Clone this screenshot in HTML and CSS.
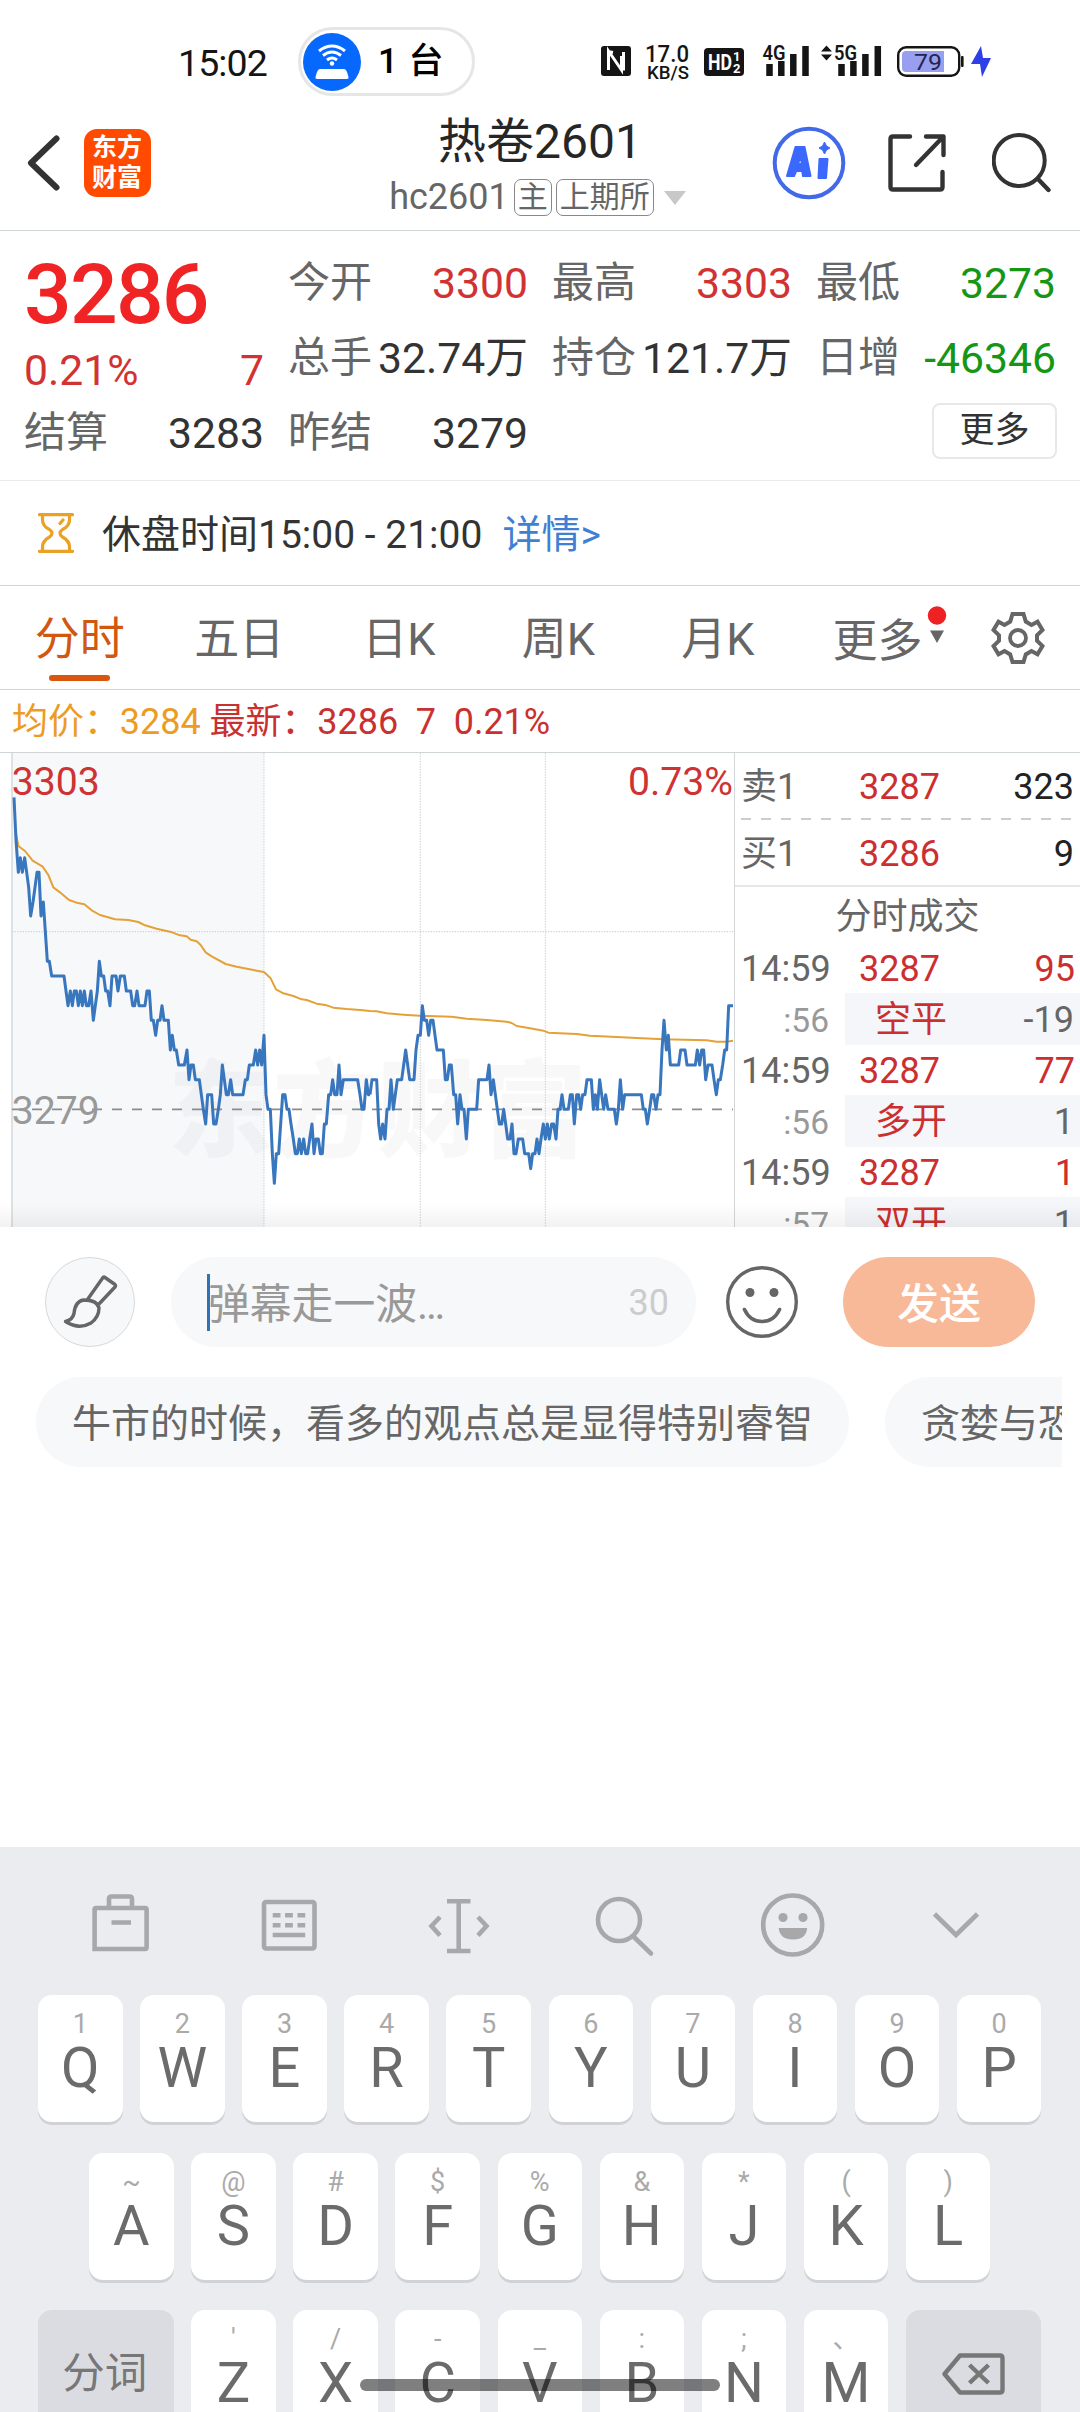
FILE: index.html
```html
<!DOCTYPE html>
<html lang="zh-CN">
<head>
<meta charset="utf-8">
<title>热卷2601</title>
<link rel="stylesheet" href="styles.css">
</head>
<body>
<div class="screen">
  <div class="statusbar">
    <span class="clock">15:02</span>
    <div class="hotspot">
      <svg class="hotspot-icon" viewBox="0 0 58 58">
        <circle cx="29" cy="29" r="29" fill="#0768fd"/>
        <g fill="none" stroke="#fff" stroke-width="3">
          <path d="M16 18q13-10 26 0"/><path d="M20 22.500q9-7 18 0"/><path d="M24 27q5-4 10 0"/>
        </g>
        <circle cx="29" cy="30.500" r="2.200" fill="#fff"/>
        <path d="M17 36h24q2 0 3 3l1.500 5q.5 2-1.500 2H14q-2 0-1.500-2l1.500-5q1-3 3-3z" fill="#fff"/>
      </svg>
      <span class="hotspot-count">1 台</span>
    </div>
    <svg class="status-icons" viewBox="600 40 394 44">
      <rect x="601" y="46" width="30" height="30" rx="3" fill="#151515"/>
      <path d="M608.500 70V51l13 19V56M608 51.500l5 1M623.500 52v18.500" fill="none" stroke="#fff" stroke-width="3"/>
      <text x="645" y="62" font-size="24" font-weight="500" textLength="44" lengthAdjust="spacingAndGlyphs">17.0</text>
      <text x="647" y="79" font-size="17.500" font-weight="500" textLength="42" lengthAdjust="spacingAndGlyphs">KB/S</text>
      <rect x="704" y="48" width="40" height="28" rx="4" fill="#151515"/>
      <text x="708" y="70" font-size="22" font-weight="700" fill="#fff" textLength="24" lengthAdjust="spacingAndGlyphs">HD</text>
      <text x="733" y="61" font-size="13" font-weight="700" fill="#fff">1</text>
      <text x="733" y="73" font-size="13" font-weight="700" fill="#fff">2</text>
      <text x="762.500" y="59.500" font-size="21" font-weight="600" textLength="23" lengthAdjust="spacingAndGlyphs">4G</text>
      <path d="M769.500 64v12M781.300 61v15M793.300 54v22M805.500 46v30" stroke="#151515" stroke-width="6.500"/>
      <path d="M821 51.500l5.500-6 5.500 6zM821 54.500l5.500 6 5.500-6z" fill="#151515"/>
      <text x="834" y="59.500" font-size="21" font-weight="600" textLength="23" lengthAdjust="spacingAndGlyphs">5G</text>
      <path d="M841.500 64v12M853.400 61v15M865.400 54v22M877.800 46v30" stroke="#151515" stroke-width="6.500"/>
      <rect x="898.200" y="47.200" width="61" height="28.600" rx="8" fill="#fff" stroke="#151515" stroke-width="2.400"/>
      <path d="M944 51v21h-38q-4 0-4-4V55q0-4 4-4z" fill="#999ff0"/>
      <text x="914" y="69.500" font-size="22.500" fill="#22264f" textLength="28" lengthAdjust="spacingAndGlyphs">79</text>
      <rect x="961" y="56" width="2.600" height="11" rx="1" fill="#151515"/>
      <path d="M981 46l-10 18h9l2 13 9-19h-8z" fill="#2e3fe6"/>
    </svg>
  </div>

  <header class="header">
    <div class="header-left">
      <svg class="back" viewBox="0 0 36 60"><path d="M31.500 5.500L6 30l25.500 24.500" fill="none" stroke="#333" stroke-width="6" stroke-linecap="round" stroke-linejoin="round"/></svg>
      <div class="logo"><span>东方</span><span>财富</span></div>
    </div>
    <div class="header-title">
      <h1>热卷2601</h1>
      <div class="subtitle">
        <span class="code">hc2601</span><span class="tag">主</span><span class="tag">上期所</span>
        <svg class="caret" viewBox="0 0 22 14"><path d="M0 0h22L11 14z" fill="#c8c8c8"/></svg>
      </div>
    </div>
    <div class="header-actions">
      <svg class="ai" viewBox="0 0 74 74">
        <circle cx="37" cy="37" r="34.300" fill="none" stroke="#4169e8" stroke-width="4"/>
        <g fill="#3b69ff" stroke="#3b69ff" stroke-width="2" stroke-linejoin="round">
          <path fill-rule="evenodd" d="M23.500 21h9l6 29h-7.500l-.8-5h-6l-2.200 5h-7zM28.500 31l-2.500 7h4z"/>
          <path d="M47.500 33h8l-1.500 19h-7.500z"/>
        </g>
        <path d="M52.500 16l2 4 3.500 2-3.500 2-2 4-2-4-3.500-2 3.500-2z" fill="#3b69ff" stroke="#3b69ff"/>
      </svg>
      <svg class="share" viewBox="0 0 58 58"><path d="M22 2.500H5q-2.500 0-2.500 2.500v48q0 2.500 2.500 2.500h47q2.500 0 2.500-2.500V38M38 2.500h17.500V21M54 4L28 31" fill="none" stroke="#333" stroke-width="4.400" stroke-linecap="round" stroke-linejoin="round"/></svg>
      <svg class="find" viewBox="0 0 60 60"><circle cx="27.200" cy="27.500" r="25.500" fill="none" stroke="#333" stroke-width="4"/><path d="M46 46l10.500 11" stroke="#333" stroke-width="4.400" stroke-linecap="round"/></svg>
    </div>
  </header>

  <section class="quote">
    <div class="price">
      <strong>3286</strong>
      <div class="pair up"><span>0.21%</span><span>7</span></div>
    </div>
    <div class="pair"><span class="label">今开</span><span class="up">3300</span></div>
    <div class="pair"><span class="label">最高</span><span class="up">3303</span></div>
    <div class="pair"><span class="label">最低</span><span class="down">3273</span></div>
    <div class="pair"><span class="label">总手</span><span>32.74万</span></div>
    <div class="pair"><span class="label">持仓</span><span>121.7万</span></div>
    <div class="pair"><span class="label">日增</span><span class="down">-46346</span></div>
    <div class="pair"><span class="label">结算</span><span>3283</span></div>
    <div class="pair"><span class="label">昨结</span><span>3279</span></div>
    <button class="more">更多</button>
  </section>

  <section class="notice">
    <svg class="hourglass" viewBox="0 0 36 40"><path d="M1.500 1.700h33M1.500 38.300h33M4.500 2v5q0 6 7 9.500 5 3.500 0 7.500-7 4-7 10v4M31.500 2v5q0 6-7 9.500-5 3.500 0 7.500 7 4 7 10v4M22 10.500l3-3.500" fill="none" stroke="#e9a126" stroke-width="3.200" stroke-linecap="round"/></svg>
    <span>休盘时间15:00 - 21:00</span>
    <a>详情&gt;</a>
  </section>

  <nav class="tabs">
    <span class="tab active">分时</span>
    <span class="tab">五日</span>
    <span class="tab">日K</span>
    <span class="tab">周K</span>
    <span class="tab">月K</span>
    <span class="tab-more">更多
      <svg class="tab-marker" viewBox="0 0 20 38"><circle cx="10" cy="9.500" r="9.200" fill="#ee2222"/><path d="M3 24.500h14L10 37z" fill="#666"/></svg>
    </span>
    <svg class="gear" viewBox="-27 -27 54 54"><path d="M-5.500-24h11l2.300 7.600 5.700 3.300 6-3.200 5 8.300-5.500 5.300v5.400l5.500 5.300-5 8.300-6-3.200-5.700 3.300-2.300 7.600h-11l-2.300-7.600-5.700-3.300-6 3.200-5-8.300 5.500-5.300v-5.400l-5.500-5.300 5-8.300 6 3.200 5.700-3.300z" fill="none" stroke="#666" stroke-width="4"/><circle r="8" fill="none" stroke="#666" stroke-width="3.800"/></svg>
  </nav>

  <div class="legend"><span class="avg">均价：3284</span> <span class="last">最新：3286  7  0.21%</span></div>

  <section class="market">
    <svg class="chart" viewBox="0 39 2202 1422">
      <rect x="36" y="39" width="756" height="1422" fill="#f6f8fa"/>
      <text class="watermark" x="504" y="1224">东方财富</text>
      <path d="M36 39v1422" stroke="#d9dcdf" stroke-width="5"/>
      <path d="M792 39v1422M1261 39v1422M1636 39v1422M36 575h2166" stroke="#c9cccf" stroke-width="3" stroke-dasharray="4 4" fill="none"/>
      <path d="M36 1108h2163" stroke="#8c8c8c" stroke-width="5" stroke-dasharray="30 30" fill="none"/>
      <g fill="none" stroke="#e5a137" stroke-width="6" stroke-linejoin="round">
        <polyline points="48,280 55,318 75,333 98,362 128,380 145,405 160,442 180,457 207,480 230,488 253,493 275,511 300,525 345,538 385,540 415,546 435,556 470,566 510,575 540,586 560,589 572,599 590,604 602,615 617,637 635,649 677,672 710,680 745,687 770,692 792,696 812,715 828,748 850,760 880,768 905,778 920,780 950,791 980,796 1000,803 1040,807 1080,810 1110,813 1130,814 1160,820 1210,824 1260,827 1355,830 1400,836 1460,840 1520,845 1535,849 1550,858 1590,865 1630,872 1645,878 1730,882 1770,887 1850,891 1910,894 1990,898 2120,901 2150,905 2180,905 2199,902"/>
      </g>
      <g fill="none" stroke="#3876bd" stroke-width="9" stroke-linejoin="round">
        <polyline points="42,172 48,300 55,397 61,353 67,397 74,353 80,397 86,442 92,528 99,486 105,442 111,397 117,397 123,528 130,486 136,575 142,664 148,664 155,708 192,708 198,753 204,797 211,753 217,797 223,753 229,753 235,797 241,753 247,797 253,753 259,797 266,797 273,753 280,841 286,797 292,753 298,664 304,708 311,708 317,753 323,753 330,797 336,708 348,708 354,753 361,708 373,708 379,753 392,753 398,797 404,797 411,753 417,797 435,797 441,753 448,753 454,841 460,841 467,886 473,841 480,841 486,797 492,841 505,841 511,930 517,886 523,930 529,930 536,975 553,975 561,930 567,1019 573,975 580,975 586,1019 598,1019 604,1064 610,1108 617,1152 623,1064 635,1064 641,1152 648,1152 655,1108 661,1064 667,975 673,1019 679,1064 685,1064 692,1019 698,1064 729,1064 736,1019 742,1019 748,975 760,975 767,930 773,975 779,930 785,975 792,886 798,1064 804,1108 811,1108 817,1241 823,1330 829,1241 836,1241 842,1152 848,1064 855,1064 861,1108 867,1108 873,1152 880,1197 886,1241 892,1241 898,1197 904,1241 911,1197 917,1241 923,1241 929,1197 936,1152 942,1241 948,1197 955,1197 961,1241 967,1241 973,1152 979,1152 986,1064 992,1064 998,1019 1004,1064 1011,1064 1017,975 1023,1064 1030,1019 1073,1019 1080,1064 1086,1108 1092,1108 1099,1019 1105,1064 1110,1064"/>
        <polyline transform="translate(1110 0)" points="0,1064 6,1019 20,1019 26,1152 32,1197 38,1152 45,1197 51,1108 57,1108 63,1019 70,1108 76,1064 82,1019 95,1019 101,975 107,930 113,975 119,1019 132,1019 138,930 144,886 151,886 157,797 163,841 170,841 176,886 182,841 189,841 195,886 201,930 220,930 226,1019 232,1019 238,975 244,975 251,1064 257,1064 263,1152 270,1064 276,1108 282,1108 289,1197 295,1108 320,1108 326,1019 351,1019 357,975 363,1064 370,1019 376,1064 382,1108 388,1152 395,1152 401,1108 407,1152 413,1197 420,1197 426,1152 432,1241 438,1241 445,1197 458,1197 464,1241 476,1241 482,1286 488,1241 495,1241 501,1197 507,1241 513,1197 520,1152 526,1197 532,1152 538,1197 545,1152 551,1152 558,1197 564,1108 570,1108 576,1064 582,1108 595,1108 601,1064 607,1064 613,1152 620,1064 626,1064 632,1108 638,1064 645,1064 651,1019 664,1019 670,1108 676,1064 682,1108 689,1019 695,1064 701,1108 707,1064 714,1108 733,1108 739,1152 745,1108 751,1019 758,1108 764,1064 814,1064 820,1108 826,1108 832,1152 839,1108 845,1064 851,1064 858,1108 864,1064 870,1064 876,930 882,841 889,930 895,886 901,975 926,975 932,930 945,930 951,975 976,975 982,930 989,975 995,930 1001,930 1007,1019 1014,975 1026,975 1032,1019 1039,1064 1045,1019 1051,1019 1058,975 1064,930 1070,930 1076,797 1089,797"/>
      </g>
      <text class="axis" x="35" y="164" fill="#cf3232">3303</text>
      <text class="axis" x="2199" y="164" fill="#cf3232" text-anchor="end">0.73%</text>
      <text class="axis" x="35" y="1151" fill="#999">3279</text>
    </svg>
    <div class="book">
      <div class="order"><span>卖1</span><b>3287</b><i>323</i></div>
      <svg class="dash" viewBox="0 0 345 2"><path d="M6 1h330" stroke="#ccc" stroke-width="2" stroke-dasharray="10 10"/></svg>
      <div class="order"><span>买1</span><b>3286</b><i>9</i></div>
      <div class="book-title">分时成交</div>
      <div class="trade"><span>14:59</span><b>3287</b><i>95</i></div>
      <div class="trade detail"><span>:56</span><b>空平</b><i>-19</i></div>
      <div class="trade"><span>14:59</span><b>3287</b><i>77</i></div>
      <div class="trade detail"><span>:56</span><b>多开</b><i>1</i></div>
      <div class="trade"><span>14:59</span><b>3287</b><i>1</i></div>
      <div class="trade detail"><span>:57</span><b>双开</b><i>1</i></div>
    </div>
  </section>

  <section class="composer">
    <div class="compose-row">
      <div class="brush">
        <svg viewBox="60 1270 60 60"><path d="M65.500 1319.500q7-1.500 8.500-8 1-12 9.500-13.500 14 0 15.500 8 0 9-8 15-12 7-25.500-1.500zM87.500 1297.500l15.500-22q1-1 2 0l10 7q1 1.200 0 2.500L99 1302" fill="none" stroke="#666" stroke-width="3.400" stroke-linejoin="round"/></svg>
      </div>
      <div class="input"><span class="placeholder">弹幕走一波…</span><span class="limit">30</span></div>
      <svg class="smile" viewBox="-37 -37 74 74"><circle r="34.300" fill="none" stroke="#666" stroke-width="3.400"/><circle cx="-12" cy="-9.500" r="4.500" fill="#666"/><circle cx="12" cy="-9.500" r="4.500" fill="#666"/><path d="M-17.500 7.500q5.500 12 17.500 12t17.500-12" fill="none" stroke="#666" stroke-width="3.600" stroke-linecap="round"/></svg>
      <button class="send">发送</button>
    </div>
    <div class="chips">
      <span class="chip">牛市的时候，看多的观点总是显得特别睿智</span>
      <span class="chip">贪婪与恐惧</span>
    </div>
  </section>

  <section class="keyboard">
    <svg class="tools" viewBox="0 1847 1080 148">
      <g fill="none" stroke="#a8a8aa" stroke-width="4.600">
        <path d="M94.600 1949V1909.500q0-1.500 1.500-1.500h49q1.500 0 1.500 1.500V1947q0 2-1.500 2zM109 1907v-8q0-2.500 2.500-2.500h18q2.500 0 2.500 2.500v8M111.500 1922.500H131"/>
        <rect x="264" y="1902" width="50.500" height="46.500" rx="2"/>
        <path d="M272.700 1915.200h32.500M272.700 1925.300h32.500" stroke-dasharray="7.800 4.600"/>
        <path d="M272.700 1935h32.500M447 1901.200h23.500M447 1951h23.500M458.700 1901v50M440 1917l-8.500 9 8.500 9.500M478 1917l8.500 9-8.500 9.500"/>
        <circle cx="619" cy="1920" r="21"/><path d="M634 1937l17 16.500" stroke-linecap="round"/>
        <circle cx="792.700" cy="1925" r="29.500"/>
        <path d="M934.500 1914l21.500 21 21.500-21"/>
      </g>
      <g fill="#a8a8aa"><circle cx="783" cy="1917.500" r="4.600"/><circle cx="803" cy="1917.500" r="4.600"/><path d="M778.700 1928h28.500q-1 11.500-14.200 11.500t-14.300-11.500z"/></g>
    </svg>
    <div class="keys">
      <div class="key"><small>1</small>Q</div><div class="key"><small>2</small>W</div><div class="key"><small>3</small>E</div><div class="key"><small>4</small>R</div><div class="key"><small>5</small>T</div><div class="key"><small>6</small>Y</div><div class="key"><small>7</small>U</div><div class="key"><small>8</small>I</div><div class="key"><small>9</small>O</div><div class="key"><small>0</small>P</div>
    </div>
    <div class="keys">
      <div class="key"><small>~</small>A</div><div class="key"><small>@</small>S</div><div class="key"><small>#</small>D</div><div class="key"><small>$</small>F</div><div class="key"><small>%</small>G</div><div class="key"><small>&amp;</small>H</div><div class="key"><small>*</small>J</div><div class="key"><small>(</small>K</div><div class="key"><small>)</small>L</div>
    </div>
    <div class="keys">
      <div class="key wide">分词</div><div class="key"><small>'</small>Z</div><div class="key"><small>/</small>X</div><div class="key"><small>-</small>C</div><div class="key"><small>_</small>V</div><div class="key"><small>:</small>B</div><div class="key"><small>;</small>N</div><div class="key"><small>、</small>M</div>
      <div class="key wide"><svg class="backspace" viewBox="0 0 64 44"><path d="M19 3.500h40q2.500 0 2.500 2.500v32q0 2.500-2.500 2.500H19L3.500 22zM28.500 13l19 18M47.500 13l-19 18" fill="none" stroke="#777" stroke-width="4.400" stroke-linejoin="round"/></svg></div>
    </div>
    <div class="homebar"></div>
  </section>
</div>
</body>
</html>
```
FILE: styles.css
```css
* { box-sizing: border-box; }
body {
  margin: 0;
  background: #fff;
  color: #333;
  font-family: Roboto, "Noto Sans CJK SC", sans-serif;
}
svg { display: block; flex: none; }
button { font-family: inherit; padding: 0; }
b, i { font-weight: 400; font-style: normal; }
.screen { width: 1080px; height: 2412px; overflow: hidden; display: flex; flex-direction: column; }
.screen > * { flex: none; }
.up { color: #d23232; }
.down { color: #159615; }

.statusbar { height: 105px; display: flex; align-items: flex-start; padding: 27px 0 0 178px; }
.clock { width: 120px; font-size: 37.500px; line-height: 72px; letter-spacing: -.9px; color: #151515; }
.hotspot { width: 177px; height: 69px; border: 3px solid #e6e6e6; border-radius: 35px; display: flex; align-items: center; padding-left: 2px; }
.hotspot-icon { width: 58px; height: 58px; }
.hotspot-count { margin-left: 17px; font-size: 35px; font-weight: 500; line-height: 60px; color: #000; word-spacing: 2px; }
.status-icons { width: 394px; height: 44px; margin: 13px 0 0 125px; fill: #151515; }

.header { height: 126px; border-bottom: 1px solid #cfd5d5; display: grid; grid-template-columns: 385px 310px 385px; }
.header-left { display: flex; padding: 24px 0 0 25px; }
.back { width: 36px; height: 60px; margin-top: 4px; }
.logo { width: 67px; height: 68px; margin-left: 22.500px; padding-top: 4px; border-radius: 13px; background: #ff4a00; color: #fff; font-size: 25px; font-weight: 700; line-height: 30px; display: flex; flex-direction: column; align-items: center; }
.header-title { padding-top: 6px; display: flex; flex-direction: column; align-items: center; }
h1 { margin: 0; font-size: 48px; font-weight: 400; line-height: 62px; color: #262626; }
.subtitle { display: flex; align-items: center; margin-top: 6px; margin-left: -5px; color: #666; }
.code { font-size: 36px; line-height: 37px; }
.tag { height: 37px; padding: 0 3px; margin-left: 4px; border: 1px solid #888; border-radius: 7px; font-size: 30px; line-height: 34px; }
.tag:nth-child(2) { margin-left: 5px; }
.caret { width: 22px; height: 14px; margin-left: 10px; }
.header-actions { display: flex; padding-left: 76.500px; }
.ai { width: 74px; height: 74px; margin-top: 21px; }
.share { width: 58px; height: 58px; margin: 29px 0 0 42px; }
.find { width: 60px; height: 60px; margin: 28px 0 0 46px; }

.quote { height: 250px; padding: 14px 24px 0; border-bottom: 1px solid #ebebeb; display: grid; grid-template-columns: repeat(4, 240px); grid-auto-rows: 75px; column-gap: 24px; }
.price { grid-row: span 2; padding-top: 10px; display: flex; flex-direction: column; }
.price strong { font-size: 84px; font-weight: 500; line-height: 80px; letter-spacing: -1.800px; color: #f02424; }
.price .pair { margin-top: 10px; height: 50px; }
.pair { display: flex; align-items: center; justify-content: space-between; font-size: 42.700px; line-height: 50px; white-space: nowrap; }
.label { font-size: 42px; color: #666; }
.more { grid-column: 4; justify-self: end; align-self: center; margin: 0 -1px 4px 0; width: 125px; height: 56px; border: 2px solid #e6e9e9; border-radius: 8px; background: #fff; color: #333; font-size: 35px; line-height: 52px; }

.notice { height: 105px; border-bottom: 1px solid #cfd5d5; display: flex; align-items: center; padding-left: 38px; font-size: 39px; line-height: 50px; }
.notice span, .notice a { margin-top: 3px; }
.hourglass { width: 36px; height: 40px; margin-right: 28px; }
.notice a { margin-left: 20px; color: #3f7fd4; }

.tabs { height: 104px; border-bottom: 1px solid #cfd5d5; display: flex; align-items: center; font-size: 45px; color: #666; }
.tab { width: 159.500px; height: 103px; line-height: 107px; text-align: center; position: relative; }
.tab.active { color: #d2570f; }
.tab.active::after { content: ""; position: absolute; left: 49px; bottom: 8px; width: 61px; height: 6px; border-radius: 3px; background: #d9560f; }
.tab-more { margin-left: 35px; display: flex; align-items: center; }
.tab-marker { width: 20px; height: 38px; margin: -25px 0 0 4px; }
.gear { width: 54px; height: 54px; margin-left: 44px; }

.legend { height: 62px; padding: 1px 0 0 12px; font-size: 36px; line-height: 63px; letter-spacing: -.05px; white-space: pre; }
.avg { color: #ec9c22; }
.last { color: #c93131; }

.market { height: 475px; border-top: 1px solid #cfd5d5; display: grid; grid-template-columns: 734px 346px; overflow: hidden; position: relative; }
.market::after { content: ""; position: absolute; left: 0; right: 0; bottom: 0; height: 24px; background: linear-gradient(rgba(0,0,0,0), rgba(0,0,0,.05)); }
.chart { width: 734px; height: 474px; }
.watermark { font-size: 314px; font-weight: 900; fill: #8a8f96; fill-opacity: .06; }
.axis { font-size: 117.500px; }
.book { border-left: 1px solid #d3d7d9; height: 474px; overflow: hidden; font-size: 36px; line-height: 44px; }
.book > * { display: grid; grid-template-columns: 110px 1fr 96px; align-items: center; }
.book b { color: #cc2f2f; padding-left: 14px; }
.book i { text-align: right; padding-right: 6px; }
.order { height: 65px; padding-top: 3px; }
.order span { padding-left: 6px; color: #666; }
.order i { color: #222; }
.dash { width: 345px; height: 2px; }
.book .book-title { display: block; height: 58px; border-top: 2px solid #e5e7e8; padding-top: 3px; line-height: 54px; text-align: center; color: #666; }
.trade { height: 50px; padding-top: 1px; }
.trade span { color: #666; padding-left: 6px; }
.trade i { color: #cc2f2f; padding-right: 5px; }
.detail { height: 52px; padding-top: 2px; background: linear-gradient(#f5f6f9, #f5f6f9) 110px 0 no-repeat; }
.detail span { font-size: 33.500px; color: #999; text-align: right; padding: 2px 16px 0 0; }
.book .detail b { padding-left: 30px; }
.detail i { color: #666; padding-right: 6px; }

.composer { height: 620px; background: #fff; padding: 30px 0 0 36px; }
.compose-row { display: flex; align-items: center; padding-left: 9px; }
.brush { width: 90px; height: 90px; border: 1.500px solid #d6d9dc; border-radius: 50%; background: #f6f8fa; display: grid; place-items: center; }
.brush svg { width: 60px; height: 60px; }
.input { width: 525px; height: 90px; margin-left: 36px; padding: 0 27px 0 36px; border-radius: 45px; background: #f6f8fa; display: flex; align-items: center; justify-content: space-between; font-size: 41.800px; }
.placeholder { height: 57px; line-height: 61px; border-left: 3px solid #2f72b8; color: #999; text-indent: -2px; }
.limit { padding-top: 2px; font-size: 36px; color: #ccc; }
.smile { width: 74px; height: 74px; margin-left: 29px; }
.send { width: 192px; height: 90px; margin-left: 44px; padding-bottom: 3px; border: 0; border-radius: 45px; background: #f8b999; color: #fff; font-size: 42px; font-weight: 500; }
.chips { width: 1026px; margin-top: 30px; display: flex; gap: 36px; overflow: hidden; }
.chip { flex: none; height: 90px; padding: 0 36px; border-radius: 45px; background: #f6f8fa; color: #666; font-size: 39px; line-height: 94px; white-space: nowrap; }

.keyboard { height: 565px; background: #ebecf0; position: relative; overflow: hidden; }
.tools { width: 1080px; height: 148px; }
.keys { display: flex; justify-content: center; gap: 17.600px; padding-right: .5px; margin-bottom: 30.500px; }
.key { width: 84.500px; height: 127px; padding-top: 12px; border-radius: 14px; background: #fff; box-shadow: 0 3px 0 #d1d2d7; color: #6b6b6b; font-size: 56px; line-height: 54px; text-align: center; }
.key small { display: block; font-size: 27px; line-height: 34px; color: #aaa; }
.key.wide { width: 135.500px; padding: 0 2px 0 0; background: #dbdce1; font-size: 42.500px; line-height: 128px; display: flex; justify-content: center; color: #777; }
.backspace { width: 64px; height: 44px; margin-top: 42px; }
.homebar { position: absolute; left: 360px; top: 532px; width: 360px; height: 12px; border-radius: 6px; background: rgba(0,0,0,.5); }
```
